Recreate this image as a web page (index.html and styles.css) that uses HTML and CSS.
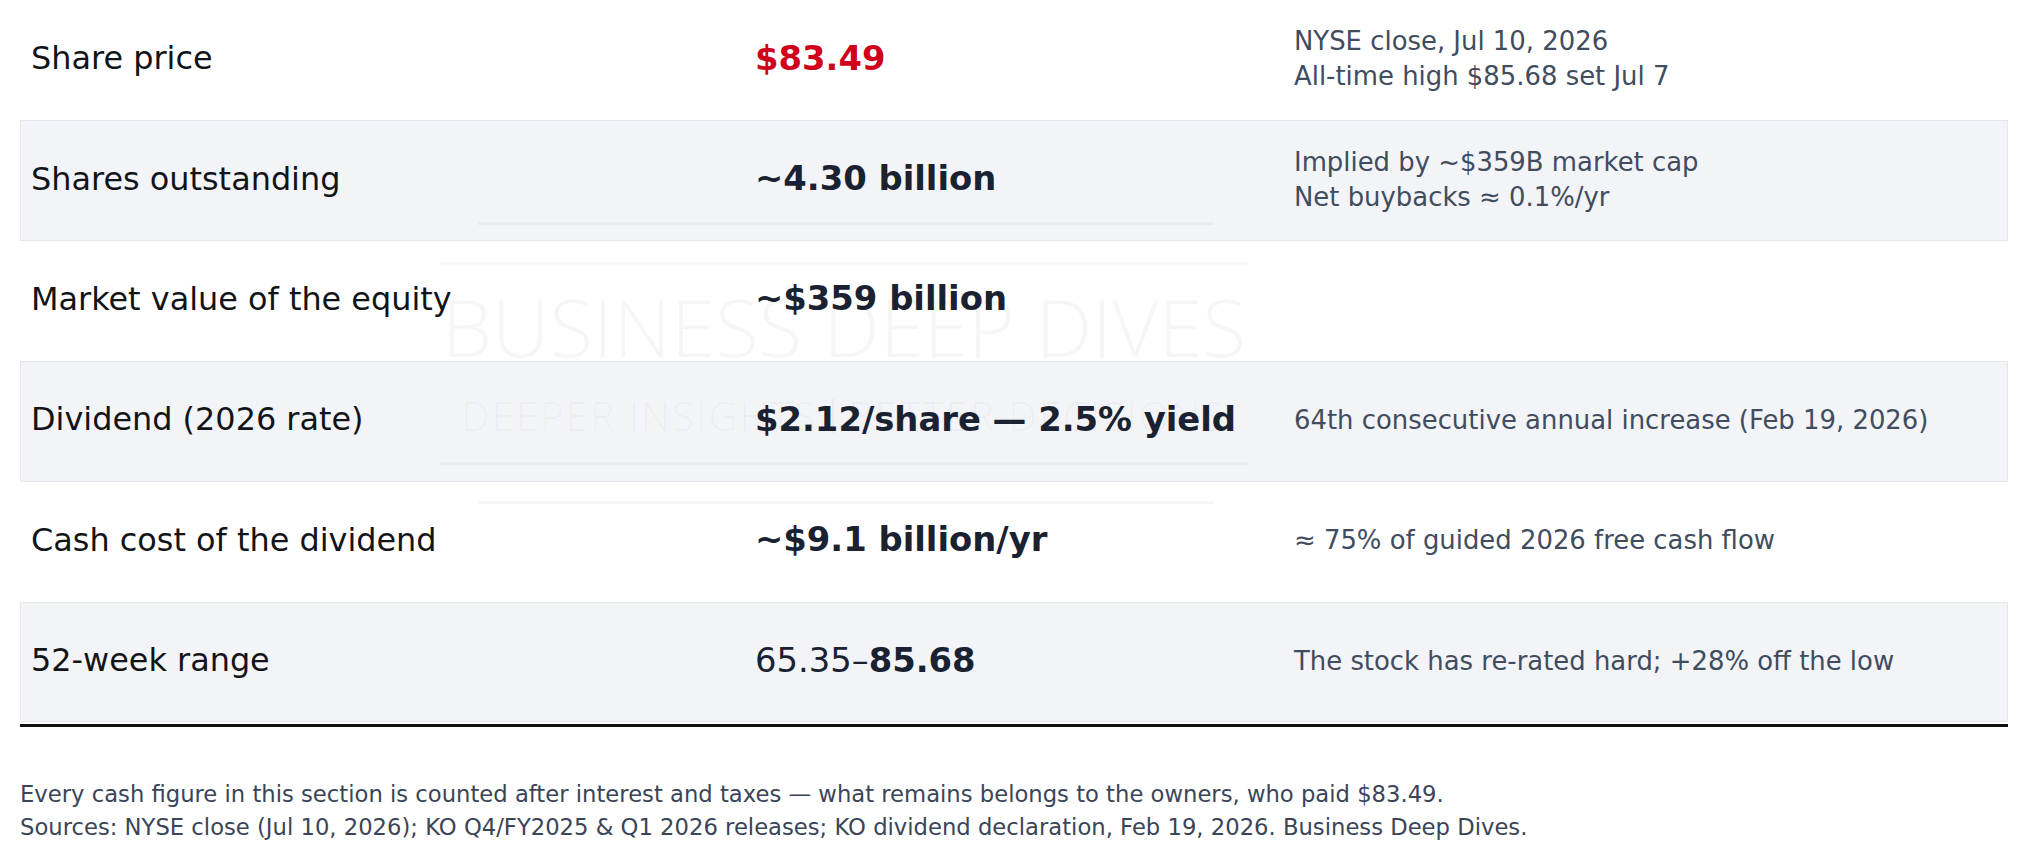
FILE: index.html
```html
<!DOCTYPE html>
<html lang="en">
<head>
<meta charset="utf-8">
<title>Share price summary</title>
<link rel="stylesheet" href="styles.css">
</head>
<body>
<div class="page">
  <div class="table">
    <div class="row">
      <div class="cell label">Share price</div>
      <div class="cell value red">$83.49</div>
      <div class="cell note">NYSE close, Jul 10, 2026<br>All-time high $85.68 set Jul 7</div>
    </div>
    <div class="row shaded">
      <div class="cell label">Shares outstanding</div>
      <div class="cell value">~4.30 billion</div>
      <div class="cell note">Implied by ~$359B market cap<br>Net buybacks ≈ 0.1%/yr</div>
    </div>
    <div class="row">
      <div class="cell label">Market value of the equity</div>
      <div class="cell value">~$359 billion</div>
      <div class="cell note"></div>
    </div>
    <div class="row shaded">
      <div class="cell label">Dividend (2026 rate)</div>
      <div class="cell value">$2.12/share — 2.5% yield</div>
      <div class="cell note">64th consecutive annual increase (Feb 19, 2026)</div>
    </div>
    <div class="row">
      <div class="cell label">Cash cost of the dividend</div>
      <div class="cell value">~$9.1 billion/yr</div>
      <div class="cell note">≈ 75% of guided 2026 free cash flow</div>
    </div>
    <div class="row shaded">
      <div class="cell label">52-week range</div>
      <div class="cell value"><span class="light">65.35–</span>85.68</div>
      <div class="cell note">The stock has re-rated hard; +28% off the low</div>
    </div>
  </div>

  <p class="foot">Every cash figure in this section is counted after interest and taxes — what remains belongs to the owners, who paid $83.49.<br>Sources: NYSE close (Jul 10, 2026); KO Q4/FY2025 &amp; Q1 2026 releases; KO dividend declaration, Feb 19, 2026. Business Deep Dives.</p>

  <div class="watermark" aria-hidden="true">
    <div class="wm-line short"></div>
    <div class="wm-line"></div>
    <div class="wm-title">BUSINESS DEEP DIVES</div>
    <div class="wm-sub">DEEPER INSIGHTS <span class="wm-bar"></span> BETTER DECISIONS</div>
    <div class="wm-line gap3"></div>
    <div class="wm-line short gap4"></div>
  </div>
</div>
</body>
</html>
```

FILE: styles.css
```css
* { box-sizing: border-box; }

html, body {
  margin: 0;
  padding: 0;
  background: #ffffff;
}

body {
  font-family: "DejaVu Sans", Verdana, sans-serif;
  color: #111418;
}

.page {
  position: relative;
  padding: 0 19px 0 20px;
}

.table {
  display: flex;
  flex-direction: column;
  padding-bottom: 2px;
  border-bottom: 3px solid #111111;
}

.row {
  display: grid;
  grid-template-columns: 724px 538px 1fr;
  align-items: center;
  height: 120.4px;
  border: 1px solid transparent;
}

.row.shaded {
  background: #f3f4f7;
  border-color: #e4e7ec;
}

.cell {
  padding: 0 11px 4px 10px;
}

.label {
  font-size: 31.9px;
  color: #121417;
}

.value {
  padding-left: 10px;
  font-size: 33.8px;
  font-weight: bold;
  color: #1a2130;
  white-space: nowrap;
}

.value .light {
  font-weight: normal;
}

.value.red {
  color: #d0021b;
}

.note {
  padding-left: 11px;
  padding-bottom: 2px;
  font-size: 25.9px;
  line-height: 35px;
  color: #414c5e;
  white-space: nowrap;
}

.foot {
  margin: 51px 0 0 0;
  font-size: 22.7px;
  line-height: 32.5px;
  color: #3a4558;
}

.watermark {
  position: absolute;
  left: 440px;
  top: 222px;
  width: 808px;
  display: flex;
  flex-direction: column;
  align-items: stretch;
  pointer-events: none;
  font-family: "Open Sans", "Liberation Sans", sans-serif;
  font-weight: 300;
  color: rgba(20, 30, 50, 0.04);
}

.wm-line {
  height: 3px;
  background: rgba(20, 30, 50, 0.04);
  margin-top: 37px;
}

.wm-line.short {
  margin-left: 38px;
  margin-right: 35px;
}

.wm-line:first-child {
  margin-top: 0;
}

.wm-title {
  margin-top: 21px;
  font-size: 80px;
  line-height: 80px;
  text-align: center;
  white-space: nowrap;
}

.wm-sub {
  margin-top: 30px;
  font-size: 40px;
  line-height: 40px;
  letter-spacing: 2.2px;
  text-align: center;
  white-space: nowrap;
  display: flex;
  justify-content: center;
  align-items: center;
  gap: 14px;
}

.wm-bar {
  display: inline-block;
  width: 2px;
  height: 34px;
  background: rgba(20, 30, 50, 0.05);
}

.wm-line.gap3 {
  margin-top: 26px;
}

.wm-line.gap4 {
  margin-top: 36px;
}
```
